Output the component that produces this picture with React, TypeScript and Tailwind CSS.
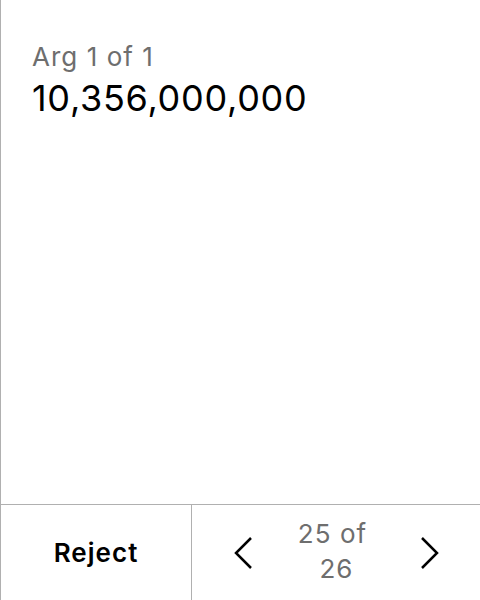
import React from "react";

export default function App() {
  return (
    <div
      className="w-[480px] h-[600px] flex flex-col bg-white border-l border-[#b0b0b0]"
      style={{ fontFamily: "Inter, 'Noto Sans', sans-serif" }}
    >
      <div className="flex-1 pl-[31px] pt-[40px]">
        <div className="text-[26px] leading-[34px] tracking-[0.04em] text-[#6e6e6e]">Arg 1 of 1</div>
        <div className="mt-[4px] text-[36px] leading-[40px] tracking-[0.02em] text-black">10,356,000,000</div>
      </div>
      <div className="h-[96px] flex border-t border-[#b0b0b0]">
        <div className="w-[191px] flex items-center justify-center border-r border-[#b0b0b0]">
          <span className="text-[26px] font-semibold tracking-[0.04em] text-black">Reject</span>
        </div>
        <div className="flex-1 flex items-center justify-between pl-[40px] pr-[39px]">
          <svg width="24" height="36" viewBox="0 0 24 36" fill="none">
            <path d="M19 3 L4 18 L19 33" stroke="black" strokeWidth="2.5" />
          </svg>
          <div className="pb-[4px] flex flex-col items-center text-[26px] leading-[35px] tracking-[0.04em] text-[#6e6e6e]">
            <span className="pr-[8px]">25 of</span>
            <span>26</span>
          </div>
          <svg width="24" height="36" viewBox="0 0 24 36" fill="none">
            <path d="M5 3 L20 18 L5 33" stroke="black" strokeWidth="2.5" />
          </svg>
        </div>
      </div>
    </div>
  );
}
